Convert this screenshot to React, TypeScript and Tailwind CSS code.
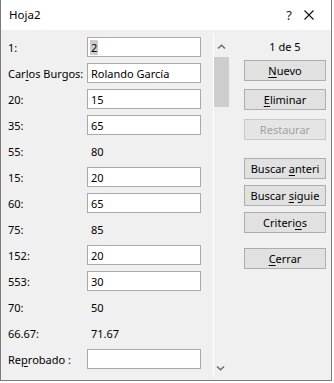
import React from "react";

type Field = {
  label: React.ReactNode;
  value: React.ReactNode;
  editable: boolean;
};

const fields: Field[] = [
  { label: "1:", value: <span className="bg-[#cccccc] px-[1px] -ml-px py-[2px]">2</span>, editable: true },
  {
    label: (
      <>
        Car<u className="underline-offset-2">l</u>os Burgos:
      </>
    ),
    value: "Rolando García",
    editable: true,
  },
  { label: "20:", value: "15", editable: true },
  { label: "35:", value: "65", editable: true },
  { label: "55:", value: "80", editable: false },
  { label: "15:", value: "20", editable: true },
  { label: "60:", value: "65", editable: true },
  { label: "75:", value: "85", editable: false },
  { label: "152:", value: "20", editable: true },
  { label: "553:", value: "30", editable: true },
  { label: "70:", value: "50", editable: false },
  { label: "66.67:", value: "71.67", editable: false },
  {
    label: (
      <>
        Re<u className="underline-offset-2">p</u>robado :
      </>
    ),
    value: "",
    editable: true,
  },
];

const Chevron = ({ down }: { down?: boolean }) => (
  <svg width="9" height="6" viewBox="0 0 9 6" className="block">
    <path
      d={down ? "M1 1.5 L4.5 4.8 L8 1.5" : "M1 4.5 L4.5 1.2 L8 4.5"}
      fill="none"
      stroke="#6a6a6a"
      strokeWidth="1.4"
    />
  </svg>
);

const Button = ({
  children,
  className = "",
  disabled,
}: {
  children: React.ReactNode;
  className?: string;
  disabled?: boolean;
}) => (
  <div
    className={
      "w-[82px] h-[21px] flex items-center justify-center border " +
      (disabled
        ? "bg-[#e5e5e5] border-[#c9c9c9] text-[#a2a2a2] "
        : "bg-[#e1e1e1] border-[#adadad] text-black ") +
      className
    }
  >
    <span className="whitespace-nowrap">{children}</span>
  </div>
);

export default function App() {
  return (
    <div
      className="w-[334px] h-[383px] bg-white text-[11px] text-black leading-none"
      style={{ fontFamily: '"Segoe UI", "Noto Sans", sans-serif' }}
    >
      <div className="w-[332px] h-[381px] border-l border-r border-b border-[#7a7a7a] bg-[#f0f0f0] flex flex-col">
        {/* Title bar */}
        <div className="h-[30px] bg-white flex items-center pl-[8px] pr-[17px]">
          <span className="text-[11.5px]">Hoja2</span>
          <div className="flex-1" />
          <span className="w-[16px] text-center text-[13px] mr-[7px] text-[#222]">?</span>
          <svg width="10" height="10" viewBox="0 0 10 10">
            <path d="M0.5 0.5 L9.5 9.5 M9.5 0.5 L0.5 9.5" stroke="#111" strokeWidth="1.1" />
          </svg>
        </div>

        {/* Body */}
        <div className="flex flex-1">
          {/* Fields */}
          <div className="w-[212px] pl-[7px] pt-[4px]">
            {fields.map((f, i) => (
              <div key={i} className="h-[26px] flex items-center">
                <div className="w-[79px] whitespace-nowrap">{f.label}</div>
                {f.editable ? (
                  <div className="w-[114px] h-[20px] bg-white border border-[#a9a9a9] flex items-center pl-[3px]">
                    {f.value}
                  </div>
                ) : (
                  <div className="w-[114px] pl-[4px]">{f.value}</div>
                )}
              </div>
            ))}
          </div>

          {/* Scrollbar */}
          <div className="w-[16px] border-l border-white my-[3px] flex flex-col">
            <div className="h-[18px] mt-[5px] flex items-center justify-center pr-px">
              <Chevron />
            </div>
            <div className="h-[50px] bg-[#cdcdcd] mt-px" />
            <div className="flex-1" />
            <div className="h-[16px] mb-[1px] flex items-center justify-center pr-[2px]">
              <Chevron down />
            </div>
          </div>

          {/* Buttons */}
          <div className="flex-1 flex flex-col pl-[15px] pt-[8px]">
            <div className="w-[82px] h-[16px] flex items-center justify-center">1 de 5</div>
            <Button className="mt-[6px]">
              <u className="underline-offset-2">N</u>uevo
            </Button>
            <Button className="mt-[8px]">
              <u className="underline-offset-2">E</u>liminar
            </Button>
            <Button className="mt-[9px]" disabled>
              Restaurar
            </Button>
            <Button className="mt-[18px]">
              Buscar <u className="underline-offset-2">a</u>nteri
            </Button>
            <Button className="mt-[6px]">
              Buscar <u className="underline-offset-2">s</u>iguie
            </Button>
            <Button className="mt-[6px]">
              Criteri<u className="underline-offset-2">o</u>s
            </Button>
            <Button className="mt-[15px]">
              <u className="underline-offset-2">C</u>errar
            </Button>
          </div>
        </div>
      </div>
    </div>
  );
}
